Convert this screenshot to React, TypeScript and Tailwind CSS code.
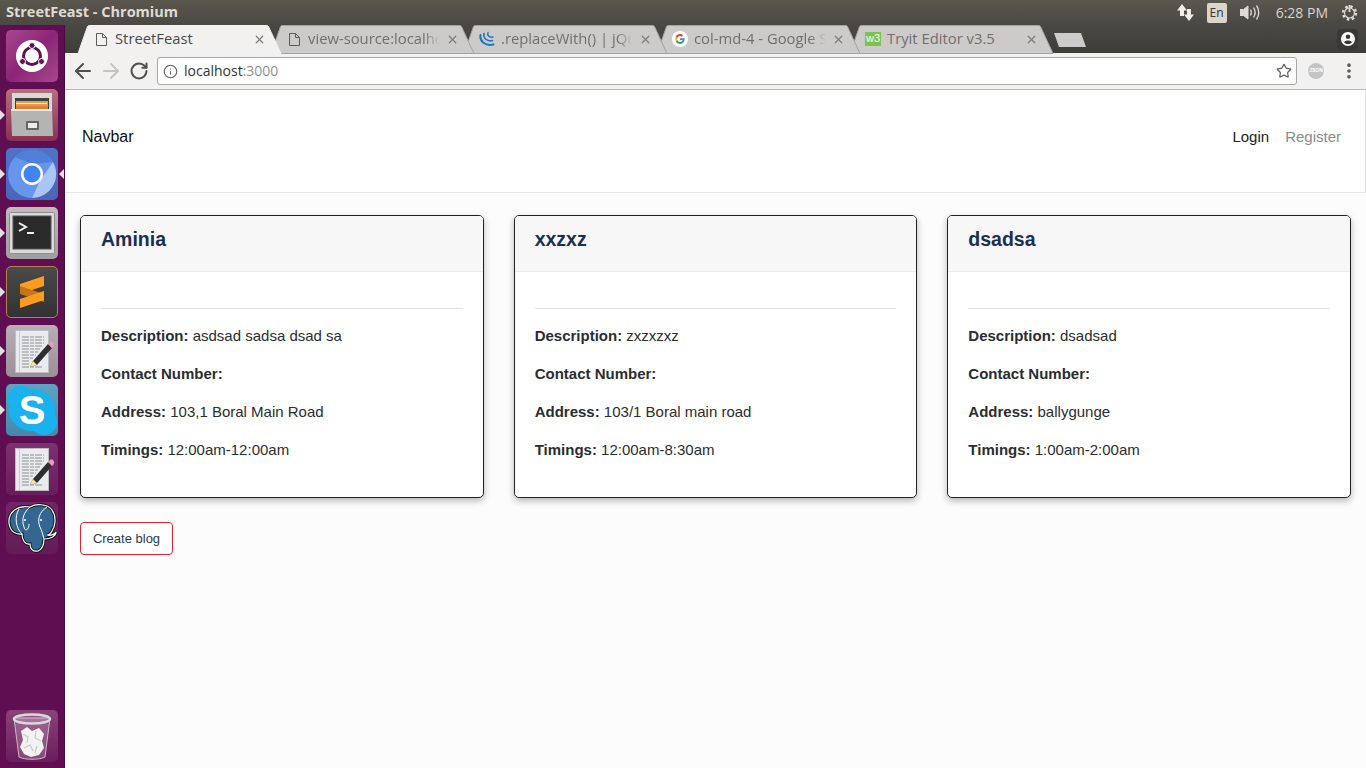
import React from "react";
import { ArrowLeft, ArrowRight, RotateCw, Info, Star, X, MoreVertical } from "lucide-react";

const uiFont = "font-['Open_Sans','Noto_Sans',sans-serif]";

const DocIcon = () => (
  <svg width="11" height="13" viewBox="0 0 11 13" fill="none" stroke="#5a5a5a" strokeWidth="1">
    <path d="M0.5 0.5H6.500L10.500 4.500V12.500H0.5Z" />
    <path d="M6.500 0.5V4.500H10.500" />
  </svg>
);

const JqueryIcon = () => (
  <svg width="16" height="16" viewBox="0 0 16 16" fill="none" stroke="#1f76b8" strokeLinecap="round">
    <path d="M1.500 4C0.5 10 6 15.500 14.500 13.500" strokeWidth="2" />
    <path d="M5 2.500C4 7 8 11 13.500 9.500" strokeWidth="1.600" />
    <path d="M9 1.500C8 4 10 7 14 6" strokeWidth="1.400" />
  </svg>
);

const GoogleIcon = () => (
  <svg width="16" height="16" viewBox="0 0 16 16">
    <circle cx="8" cy="8" r="8" fill="#fff" />
    <path d="M12.600 8.200c0-.4 0-.7-.1-1H8v1.900h2.600c-.1.6-.5 1.200-1 1.500l1.600 1.200c.9-.9 1.400-2.100 1.400-3.600z" fill="#4285f4" />
    <path d="M8 13c1.300 0 2.400-.4 3.200-1.200l-1.600-1.200c-.4.3-1 .5-1.600.5-1.200 0-2.300-.8-2.700-2L3.700 10.300C4.500 11.900 6.100 13 8 13z" fill="#34a853" />
    <path d="M5.300 9.100c-.2-.7-.2-1.500 0-2.200L3.700 5.700c-.7 1.400-.7 3.100 0 4.600z" fill="#fbbc05" />
    <path d="M8 5c.7 0 1.300.2 1.800.7l1.400-1.400C10.400 3.500 9.300 3 8 3 6.100 3 4.500 4.100 3.700 5.700l1.600 1.200C5.700 5.800 6.800 5 8 5z" fill="#ea4335" />
  </svg>
);

const W3Icon = () => (
  <span className="w-4 h-[14px] bg-[#7cc24d] text-white text-[11px] leading-[12px] text-center font-['Liberation_Sans',sans-serif]">
    w3
  </span>
);

interface TabProps {
  title: string;
  icon: React.ReactNode;
  layer: string;
  active?: boolean;
  fade?: boolean;
}

const Tab: React.FC<TabProps> = ({ title, icon, layer, active, fade }) => (
  <div className={`relative w-[200px] h-7 -mr-[7px] shrink-0 flex items-center pl-[15px] pr-[12px] ${layer}`}>
    <svg className="absolute left-0 top-0 overflow-visible" width="204" height="28" viewBox="0 0 204 28">
      <path
        d="M0 28.500L9.500 1.500C10 .8 10.500 .5 11.500 .5H188.500C189.500 .5 190 .8 190.500 1.500L203 28.500Z"
        fill={active ? "#f2f1f0" : "#cdcbc9"}
        stroke={active ? "#f2f1f0" : "#a5a3a0"}
      />
    </svg>
    <span className="relative w-4 h-4 flex items-center justify-center shrink-0">{icon}</span>
    <span
      className={`relative ml-[6px] w-[132px] pb-[2px] whitespace-nowrap text-[14.800px] leading-[18px] ${uiFont} ${
        active ? "text-[#4a4a4a]" : "text-[#6f6f6f]"
      } ${fade ? "[mask-image:linear-gradient(to_right,black_88%,transparent)]" : ""}`}
    >
      {title}
    </span>
    <X className="relative ml-[6px] shrink-0 text-[#7d7d7d]" size={13} strokeWidth={2.2} />
  </div>
);

const Tile: React.FC<{ bg: string; arrow?: boolean; rightArrow?: boolean; children: React.ReactNode }> = ({
  bg,
  arrow,
  rightArrow,
  children,
}) => (
  <div className="relative w-full h-[52px] flex justify-start pl-[6px] shrink-0">
    {arrow && <span className="absolute left-0 top-[21px] border-y-[5px] border-y-transparent border-l-[5px] border-l-[#e6e0e4]" />}
    {rightArrow && <span className="absolute right-0 top-[21px] border-y-[5px] border-y-transparent border-r-[5px] border-r-[#e6e0e4]" />}
    <div className={`w-[52px] h-[52px] rounded-[5px] overflow-hidden flex items-center justify-center ${bg}`}>{children}</div>
  </div>
);

const EditorIcon = () => (
  <svg width="52" height="52" viewBox="0 0 52 52">
    <rect x="9.500" y="5.500" width="33" height="42" fill="#e9ebef" stroke="#bdbdc4" />
    <path d="M13.500 6V47" stroke="#efc0c0" />
    <path
      d="M16 12H38M16 15H38M16 18H38M16 21H36M16 24H34M16 27H32M16 30H30M16 33H27M16 36H24M16 39H23M16 42H36"
      stroke="#8f8f92"
      strokeWidth="1"
      strokeDasharray="7 1 4 1"
    />
    <path d="M27 36L42 19L46 23L31 40L24 42Z" fill="#2e2e2e" />
    <path d="M42 19L44 17C45 16 46 16 47 17L48 18.500C48.500 19.500 48 20.500 47.500 21.500L46 23Z" fill="#e79ac0" />
    <path d="M27 36L31 40L24 42Z" fill="#f3e3a0" />
  </svg>
);

const ELEPHANT =
  "M3 21C2 9 13 3 24 5C29 2 41 1 46 8C51 15 49 25 46 29C45 31 43 33 41 33C45 34 49 32 50 30C50 34 45 37 38 37C38 42 37 47 32 49C27 50 24 47 24 42C19 43 16 38 16 32C9 33 4 29 3 21Z";

const Launcher = () => (
  <aside className="w-[65px] h-[743px] shrink-0 bg-[#5f0e52] flex flex-col gap-[7px] pt-[5px] pb-[6px] border-r border-r-[#4a0a40] box-border">
    <Tile bg="bg-gradient-to-br from-[#a5478f] via-[#8e2478] to-[#a4478e]">
      <svg width="34" height="34" viewBox="0 0 34 34">
        <circle cx="17" cy="17" r="16" fill="#fff" />
        <circle cx="17" cy="17" r="8.500" fill="none" stroke="#5e1350" strokeWidth="3" />
        <circle cx="17" cy="6.500" r="3" fill="#5e1350" stroke="#fff" />
        <circle cx="7.500" cy="22.500" r="3" fill="#5e1350" stroke="#fff" />
        <circle cx="26.500" cy="22.500" r="3" fill="#5e1350" stroke="#fff" />
      </svg>
    </Tile>
    <Tile arrow bg="bg-gradient-to-b from-[#b5707a] to-[#8a2f58]">
      <svg width="52" height="52" viewBox="0 0 52 52">
        <path d="M6 4H46V20H6Z" fill="#d8d8d6" />
        <path d="M9 9H43V20H9Z" fill="#3f3f3f" />
        <path d="M10 12H42V20H10Z" fill="#ee9c4a" />
        <path d="M10 14.500H41" stroke="#fff" strokeWidth="1" />
        <path d="M10 17H42V22H10Z" fill="#d9803a" />
        <path d="M5 20H46L47 47H6Z" fill="#b4b4b2" />
        <path d="M5 20H46V22H5Z" fill="#e8e8e6" />
        <rect x="20" y="32" width="13" height="9" rx="1" fill="#666" />
        <rect x="22" y="34" width="9" height="5" fill="#ececec" />
      </svg>
    </Tile>
    <Tile arrow rightArrow bg="bg-gradient-to-b from-[#4f73c9] to-[#4a66b5]">
      <svg width="50" height="50" viewBox="0 0 50 50">
        <circle cx="25" cy="25" r="24" fill="#6496ee" />
        <path d="M8 8A24 24 0 0 1 46 13L25 15Z" fill="#4f7fd6" />
        <path d="M46 13A24 24 0 0 1 25 49L34 30Z" fill="#a9c6f7" />
        <circle cx="25" cy="25" r="11" fill="#fff" />
        <circle cx="25" cy="25" r="8.500" fill="#3f84f4" />
      </svg>
    </Tile>
    <Tile arrow bg="bg-gradient-to-b from-[#c0bbbf] to-[#a19ca0]">
      <svg width="46" height="42" viewBox="0 0 46 42">
        <rect x="0.500" y="0.500" width="45" height="41" rx="1" fill="#dadada" stroke="#8d8d8d" />
        <rect x="4" y="4" width="38" height="33" fill="#2a2a2a" stroke="#555" />
        <path d="M10 11L17 15L10 19" fill="none" stroke="#f2f2f2" strokeWidth="2" />
        <path d="M18 21H25" stroke="#f2f2f2" strokeWidth="2" />
      </svg>
    </Tile>
    <Tile arrow bg="bg-gradient-to-b from-[#4a4a4a] to-[#333] border border-[#b87f4f]">
      <svg width="28" height="34" viewBox="0 0 28 34">
        <path d="M26 1V11L2 19V9Z" fill="#ff9b1f" />
        <path d="M2 11L26 19V27L2 19Z" fill="#c97516" />
        <path d="M26 16V25L2 33V24Z" fill="#ff9b1f" />
      </svg>
    </Tile>
    <Tile arrow bg="bg-gradient-to-b from-[#b7afb5] to-[#9c8f99]">
      <EditorIcon />
    </Tile>
    <Tile arrow bg="bg-gradient-to-b from-[#5ca4c4] to-[#4788a9]">
      <svg width="52" height="52" viewBox="0 0 52 52">
        <ellipse cx="26" cy="26" rx="23" ry="21" fill="#19b2ef" />
        <circle cx="15" cy="15" r="13" fill="#19b2ef" />
        <circle cx="38" cy="38" r="13" fill="#19b2ef" />
        <text x="26" y="40" textAnchor="middle" fontSize="40" fontWeight="700" fill="#fff" fontFamily="Liberation Sans, sans-serif">
          S
        </text>
      </svg>
    </Tile>
    <Tile bg="bg-gradient-to-b from-[#7e3170] to-[#6a1c5d]">
      <EditorIcon />
    </Tile>
    <Tile bg="bg-gradient-to-b from-[#6f2662] to-[#661b59]">
      <svg width="52" height="52" viewBox="0 0 52 52">
        <path d={ELEPHANT} fill="#336791" stroke="#111" strokeWidth="3" />
        <path d={ELEPHANT} fill="none" stroke="#fff" strokeWidth="1.200" />
        <path
          d="M13 7C8 15 10 26 16 32M24 5C18 10 15 17 18 25C19 30 23 28 23 22M41 5C33 10 31 18 34 25C36 29 37 33 38 37"
          fill="none"
          stroke="#fff"
          strokeWidth="1"
        />
        <circle cx="19" cy="18" r="1" fill="#fff" />
        <circle cx="35" cy="18" r="1" fill="#fff" />
      </svg>
    </Tile>
    <div className="mt-auto" />
    <Tile bg="bg-gradient-to-b from-[#8a4279] to-[#6a1c5d]">
      <svg width="52" height="52" viewBox="0 0 52 52">
        <path d="M8 8L13 47C18 50 34 50 39 47L44 8Z" fill="#ffffff30" stroke="#c8bcc5" />
        <path d="M15 21L21 17L26 21L33 18L38 24L36 31L38 38L33 45L25 47L18 44L14 37L17 30Z" fill="#f2f2f2" />
        <path d="M17 24L22 27L21 33M30 21L29 28L35 31M18 38L24 35L27 41M31 36L29 43" fill="none" stroke="#c9c9c9" strokeWidth="1.200" />
        <ellipse cx="26" cy="9" rx="18" ry="4.500" fill="#ffffff20" stroke="#d9d9d9" strokeWidth="2.500" />
      </svg>
    </Tile>
  </aside>
);

const TopBar = () => (
  <header className="h-[25px] shrink-0 bg-gradient-to-b from-[#5a574e] to-[#4a4842] flex items-center pl-[6px] pr-2">
    <span className={`text-[14.500px] font-bold text-[#dfdbd2] leading-none ${uiFont}`}>StreetFeast - Chromium</span>
    <div className="ml-auto flex items-center">
      <svg width="17" height="17" viewBox="0 0 17 17" fill="#f2eee6">
        <path d="M5 0L10 6.500H7V12H3V6.500H0Z" />
        <path d="M12 17L7 10.500H10V5H14V10.500H17Z" />
      </svg>
      <span className="ml-[13px] w-5 h-5 rounded-[2px] bg-[#dad6ce] text-[#3c3b37] text-[12px] flex items-center justify-center font-['Noto_Sans',sans-serif]">
        En
      </span>
      <svg className="ml-[13px]" width="20" height="17" viewBox="0 0 20 17" fill="none" stroke="#dfdbd2">
        <path d="M0 5.500H3.500L8 2V15L3.500 11.500H0Z" fill="#dfdbd2" />
        <path d="M10.500 5.500C11.500 7 11.500 10 10.500 11.500" strokeWidth="1.300" />
        <path d="M13.500 3.500C15.500 6.500 15.500 10.500 13.500 13.500" strokeWidth="1.300" />
        <path d="M16.500 1.500C19.500 5.500 19.500 11.500 16.500 15.500" strokeWidth="1.300" />
      </svg>
      <span className={`ml-[16px] text-[14px] leading-none text-[#d9d5cc] ${uiFont}`}>6:28 PM</span>
      <svg className="ml-[13px]" width="17" height="17" viewBox="0 0 17 17" fill="none" stroke="#dfdbd2">
        <circle cx="8.500" cy="9" r="6.500" strokeWidth="2.400" strokeDasharray="2.500 2.600" />
        <circle cx="8.500" cy="9" r="5" strokeWidth="1.200" />
        <path d="M8.500 1V8" strokeWidth="1.800" />
      </svg>
    </div>
  </header>
);

const TabStrip = () => (
  <div className="relative h-7 shrink-0 bg-gradient-to-b from-[#4a4842] to-[#3f3d38] flex items-center pl-[13px]">
    <Tab active layer="z-50" title="StreetFeast" icon={<DocIcon />} />
    <Tab fade layer="z-40" title="view-source:localho" icon={<DocIcon />} />
    <Tab fade layer="z-30" title=".replaceWith() | jQu" icon={<JqueryIcon />} />
    <Tab fade layer="z-20" title="col-md-4 - Google Se" icon={<GoogleIcon />} />
    <Tab layer="z-10" title="Tryit Editor v3.5" icon={<W3Icon />} />
    <svg className="ml-[10px] self-start mt-[7px]" width="34" height="16" viewBox="0 0 34 16">
      <path d="M1 1H28L33 15H6Z" fill="#cdcbc9" />
    </svg>
    <div className="ml-auto mr-[8px] w-[21px] h-[21px] rounded-[4px] bg-[#3a3834] flex items-center justify-center">
      <svg width="14" height="14" viewBox="0 0 14 14" fill="#fff">
        <path d="M7 0a7 7 0 1 0 0 14A7 7 0 0 0 7 0zm0 2.500a2.300 2.300 0 1 1 0 4.600 2.300 2.300 0 0 1 0-4.600zM3 10.500c.5-1.500 2.300-2 4-2s3.500.5 4 2a5.500 5.500 0 0 1-8 0z" />
      </svg>
    </div>
  </div>
);

const Toolbar = () => (
  <div className="h-[37px] shrink-0 bg-[#f2f1f0] border-b border-b-[#b9b7b4] flex items-start pt-[4px] pl-[6px]">
    <ArrowLeft className="mt-[2px] text-[#4f4f4f]" size={24} strokeWidth={2} />
    <ArrowRight className="ml-[4px] mt-[2px] text-[#c4c4c4]" size={24} strokeWidth={2} />
    <RotateCw className="ml-[6px] mt-[4px] text-[#4f4f4f]" size={20} strokeWidth={2.4} />
    <div className="ml-[8px] w-[1140px] h-[28px] bg-white rounded-[3px] border border-[#a9a7a4] flex items-center pl-[5px] pr-[4px]">
      <Info className="text-[#5f5f5f]" size={15} strokeWidth={1.8} />
      <span className={`ml-[6px] text-[14px] leading-none text-[#333] ${uiFont}`}>
        localhost<span className="text-[#8f8f8f]">:3000</span>
      </span>
      <Star className="ml-auto text-[#5f5f5f]" size={16} strokeWidth={1.8} />
    </div>
    <span className="ml-[11px] mt-[6px] w-4 h-4 rounded-full bg-[#c4c4c4] text-white text-[5px] font-bold flex items-center justify-center font-['Liberation_Sans',sans-serif]">
      JSON
    </span>
    <MoreVertical className="ml-[15px] mt-[4px] text-[#5a5a5a]" size={20} strokeWidth={2.4} />
  </div>
);

interface Shop {
  name: string;
  description: string;
  address: string;
  timings: string;
}

const shops: Shop[] = [
  { name: "Aminia", description: "asdsad sadsa dsad sa", address: "103,1 Boral Main Road", timings: "12:00am-12:00am" },
  { name: "xxzxz", description: "zxzxzxz", address: "103/1 Boral main road", timings: "12:00am-8:30am" },
  { name: "dsadsa", description: "dsadsad", address: "ballygunge", timings: "1:00am-2:00am" },
];

const Field: React.FC<{ label: string; value?: string }> = ({ label, value }) => (
  <p className="h-[38px] leading-[38px] text-[15px] text-[#2a2d31]">
    <strong className="font-bold">{label}:</strong> {value}
  </p>
);

const ShopCard: React.FC<{ shop: Shop }> = ({ shop }) => (
  <div className="h-[283px] bg-white border border-[#212121] rounded-[5px] shadow-[0_3px_7px_rgba(0,0,0,0.28)] overflow-hidden">
    <div className="h-[56px] bg-[#f7f7f7] border-b border-b-[#ebebeb] px-5 pt-[8px]">
      <h2 className="text-[19.500px] leading-[30px] font-bold text-[#1b3050]">{shop.name}</h2>
    </div>
    <div className="px-5 pt-[36px]">
      <hr className="border-t border-t-[#e2e2e2]" />
      <div className="mt-[8px]">
        <Field label="Description" value={shop.description} />
        <Field label="Contact Number" />
        <Field label="Address" value={shop.address} />
        <Field label="Timings" value={shop.timings} />
      </div>
    </div>
  </div>
);

const Page = () => (
  <main className="flex-1 bg-[#fcfcfc] font-['Liberation_Sans',sans-serif]">
    <nav className="h-[103px] bg-white border-b border-r border-[#e7e7e7] flex items-start pt-[37px] pl-[17px] pr-[24px] text-[15px]">
      <span className="text-[16px] leading-[20px] text-[#111]">Navbar</span>
      <span className="ml-auto leading-[20px] text-[#222]">Login</span>
      <span className="ml-[16px] leading-[20px] text-[#8a8a8a]">Register</span>
    </nav>
    <div className="px-[15px] pt-[22px]">
      <div className="grid grid-cols-3 gap-[30px]">
        {shops.map((s) => (
          <ShopCard key={s.name} shop={s} />
        ))}
      </div>
      <button className="mt-[24px] w-[93px] h-[33px] rounded-[4px] border border-[#ee1c30] bg-white text-[13px] text-[#2b3a4f]">
        Create blog
      </button>
    </div>
  </main>
);

export default function App() {
  return (
    <div className="w-[1366px] h-[768px] overflow-hidden flex flex-col bg-white">
      <TopBar />
      <div className="flex-1 flex min-h-0">
        <Launcher />
        <div className="flex-1 flex flex-col min-w-0">
          <TabStrip />
          <Toolbar />
          <Page />
        </div>
      </div>
    </div>
  );
}
